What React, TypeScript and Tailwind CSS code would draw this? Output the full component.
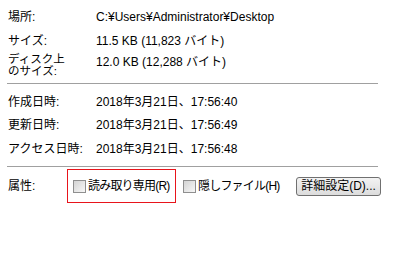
import React from "react";

const font = { fontFamily: '"Liberation Sans", "Noto Sans CJK JP", sans-serif' };

function Row({ label, value, h = "h-[24px]" }: { label: string; value: string; h?: string }) {
  return (
    <div className={`flex items-center ${h}`}>
      <div className="w-[88px] shrink-0">{label}</div>
      <div className="whitespace-nowrap">{value}</div>
    </div>
  );
}

function Check({ label }: { label: string }) {
  return (
    <div className="flex items-center gap-[2px] whitespace-nowrap">
      <span className="w-[13px] h-[13px] border border-[#8f8f8f] bg-gradient-to-br from-[#d4d4d4] to-[#f7f7f7] shrink-0" />
      <span className="tracking-[-0.8px]">{label}</span>
    </div>
  );
}

export default function App() {
  return (
    <div className="w-[394px] h-[260px] bg-white text-black text-[12px] leading-[16px] pl-[8px] pt-[5px]" style={font}>
      <Row label="場所:" value="C:¥Users¥Administrator¥Desktop" />
      <Row label="サイズ:" value="11.5 KB (11,823 バイト)" />
      <div className="flex h-[26px]">
        <div className="w-[88px] shrink-0 leading-[12px] text-[11.5px]">
          ディスク上
          <br />
          のサイズ:
        </div>
        <div className="pt-[1px]">12.0 KB (12,288 バイト)</div>
      </div>
      <div className="mt-[4px] h-px w-[371px] -ml-px bg-[#a0a0a0]" />
      <div className="pt-[6px]">
        <Row label="作成日時:" value="2018年3月21日、17:56:40" h="h-[23px]" />
        <Row label="更新日時:" value="2018年3月21日、17:56:49" h="h-[24px]" />
        <Row label="アクセス日時:" value="2018年3月21日、17:56:48" h="h-[23px]" />
      </div>
      <div className="mt-[6px] h-px w-[371px] -ml-px bg-[#a0a0a0]" />
      <div className="flex items-center mt-[2px]">
        <div className="w-[59px] shrink-0">属性:</div>
        <div className="h-[34px] w-[109px] border border-[#e8141b] flex items-center pl-[5px]">
          <Check label="読み取り専用(R)" />
        </div>
        <div className="ml-[7px] w-[113px]">
          <Check label="隠しファイル(H)" />
        </div>
        <button className="h-[19px] w-[85px] border border-[#707070] rounded-[3px] bg-gradient-to-b from-[#f3f3f3] to-[#dcdcdc] text-[12px] leading-[16px] flex items-center justify-center whitespace-nowrap">
          詳細設定(D)...
        </button>
      </div>
    </div>
  );
}
